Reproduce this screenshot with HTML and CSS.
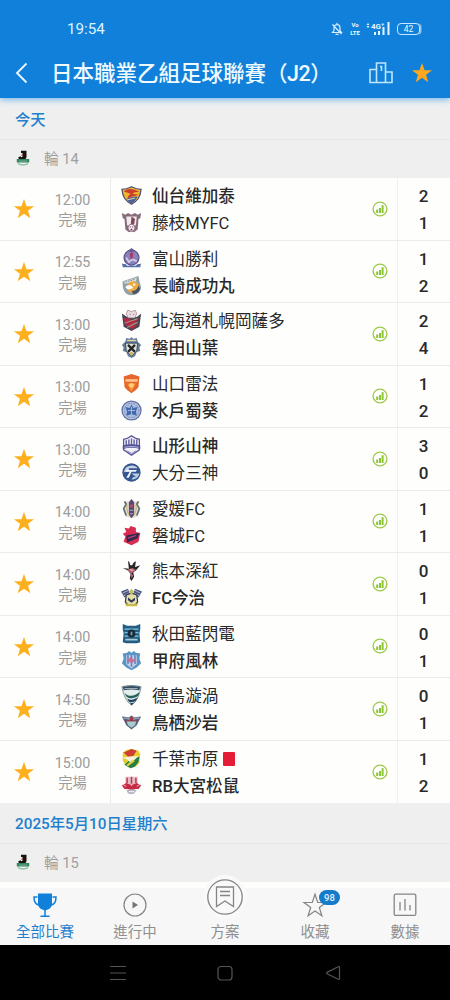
FILE: index.html
```html
<!DOCTYPE html>
<html lang="zh-Hant">
<head>
  <meta charset="UTF-8">
  <meta name="viewport" content="width=device-width, initial-scale=1.0">
  <title>日本職業乙組足球聯賽（J2）</title>
  <link rel="stylesheet" href="styles.css">
</head>
<body>
  <svg class="defs" width="0" height="0">
    <symbol id="star" viewBox="0 0 24 24"><path d="M12 1l2.800 8H23l-6.600 5 2.400 8.200L12 17.300 5.200 22.200 7.600 14 1 9h8.200z"/></symbol>
    <symbol id="stats" viewBox="0 0 16 16">
      <circle cx="8" cy="8" r="6.900" fill="none" stroke="#9ccb4b" stroke-width="1.400"/>
      <path d="M4.200 8.500h2V12h-2zM7 7h2v5H7zM9.600 4.200h2V12h-2z" fill="#8cc435"/>
    </symbol>
    <symbol id="jleague" viewBox="0 0 14 16">
      <path d="M5 .8h5.500V7c0 3.500-7.500 3.500-8.500.500l2.500-1.200c.5 1.200 2 1.200 2-.3V3H5z" fill="#171311"/>
      <path d="M5.500 5.500L7 4.500" stroke="#c23c3c" stroke-width="1.200"/>
      <path d="M.8 9h12.400v3.500H.8z" fill="#358460"/>
      <path d="M2 13.300c3 2 7 2 10 0" fill="none" stroke="#8ebfa5" stroke-width="1.600"/>
      <path d="M3 11h8" stroke="#9bc9b2" stroke-width=".6"/>
    </symbol>
  </svg>

  <header class="header">
    <div class="status">
      <span class="clock">19:54</span>
      <div class="status-icons">
        <svg width="12" height="14" viewBox="0 0 12 14" fill="none" stroke="#d9efff" stroke-width="1.200"><path d="M1.500 10.500h9L9 8.500V6c0-4.500-6-4.500-6 0v2.500zM6 .8v1.500M4.500 12.300h3M1.500 2.500l9 9.500"/></svg>
        <div class="volte"><span>Vo</span><span>LTE</span></div>
        <svg width="24" height="14" viewBox="0 0 24 14" fill="#e5f5ff"><path d="M2 1l1.500 2h-3zM2 6L.5 4h3zM8 10h2v3H8zM12 9h2v4h-2zM16.500 5h2v8h-2zM21.500 0h2v13h-2z"/><text x="5" y="6.500" class="net">4G⁺</text></svg>
        <span class="battery">42</span>
      </div>
    </div>
    <div class="toolbar">
      <svg class="back" width="14" height="22" viewBox="0 0 14 22" fill="none" stroke="#e8f6ff" stroke-width="1.900"><path d="M11.500 1.500L2 11l9.500 9.500"/></svg>
      <h1>日本職業乙組足球聯賽<span class="code">（J2）</span></h1>
      <svg class="podium" width="24" height="22" viewBox="0 0 24 22" fill="none" stroke="#bfe6ff" stroke-width="1.600"><path d="M7.500 20.500V1h9v19.500M7.500 7.500H1v13h22V10h-6.500M11 4.500h1.500V9"/></svg>
      <svg class="fav" width="22" height="22"><use href="#star"/></svg>
    </div>
  </header>

  <main>
    <h2 class="day">今天</h2>
    <div class="round"><svg width="14" height="16"><use href="#jleague"/></svg>輪 14</div>

    <section class="matches">
      <div class="match">
        <svg class="star"><use href="#star"/></svg>
        <div class="time">12:00<br>完場</div>
        <div class="teams">
          <div class="team win"><svg class="crest" viewBox="0 0 24 24"><path d="M1 5c4 0 7-1 11-3 4 2 7 3 11 3-1 9-4 13-11 17C5 18 2 14 1 5z" fill="#edb52b" stroke="#4d4b76" stroke-width="1.300"/><path d="M3 7c6-4 11-3 18 1-4 0-6 0-8 2l7 1c-5 2-9 2-12 5-1-3 1-4 3-6-3-1-5-2-8-3z" fill="#c93e2c"/><path d="M6 16c4-2 8-3 13-3-2 4-4 6-7 8-3-2-5-3-6-5z" fill="#4961a0"/><path d="M7 17l9-2" stroke="#f4e6ae"/></svg>仙台維加泰</div>
          <div class="team"><svg class="crest" viewBox="0 0 24 24"><path d="M1 1l4 2 3-2 4 2 4-2 3 2 4-2-1 6-2 1-1 12-4 3-3-1-3 1-4-3L4 8 2 7z" fill="#866c7a"/><path d="M6 5h12l-1 10-5 3-5-3z" fill="#f1e8eb"/><path d="M12 5l4 3-1 6-4 2z" fill="#81455c"/><circle cx="12" cy="18" r="4" fill="#f5edf0" stroke="#8c6375"/><path d="M10 17h1m2 0h1m-3 3h2" stroke="#65394d" stroke-width="1.500"/></svg>藤枝MYFC</div>
        </div>
        <svg class="stats"><use href="#stats"/></svg>
        <div class="score">2<br>1</div>
      </div>

      <div class="match">
        <svg class="star"><use href="#star"/></svg>
        <div class="time">12:55<br>完場</div>
        <div class="teams">
          <div class="team"><svg class="crest" viewBox="0 0 24 24"><circle cx="12" cy="11" r="8.500" fill="#8a82bb" stroke="#585389" stroke-width="1.400"/><path d="M8 3l4-3 4 3-4 2z" fill="#6a5a91"/><path d="M10 6l4-1-1 8h-2z" fill="#a53b69"/><path d="M6 11l3 5 4-3 5 2" fill="none" stroke="#d3cce4" stroke-width="2"/><path d="M1 17c2 3 4 0 5 2 2 3 4 0 6 1 3 0 4 1 6-1 2-2 3 1 5-2l-1 5H2z" fill="#5670ac"/></svg>富山勝利</div>
          <div class="team win"><svg class="crest" viewBox="0 0 24 24"><path d="M2 7L20 1l1 6 2 7c-1 7-6 9-11 9C5 23 1 17 2 7z" fill="#91a2a8"/><path d="M4 7l14-4-1 4L4 10z" fill="#e3e4df"/><path d="M5 8l11-3" stroke="#6d7d86" stroke-dasharray="2 1"/><circle cx="14" cy="14" r="7" fill="#eda93f"/><path d="M5 14c3-4 7-3 9 1-4 0-5 4-9-1z" fill="#fff"/><path d="M12 18c4 1 7-2 8-6l2 4c-2 4-5 6-8 6z" fill="#485566"/><circle cx="15" cy="11" r="1.500" fill="#fff1cf"/></svg>長崎成功丸</div>
        </div>
        <svg class="stats"><use href="#stats"/></svg>
        <div class="score">1<br>2</div>
      </div>

      <div class="match">
        <svg class="star"><use href="#star"/></svg>
        <div class="time">13:00<br>完場</div>
        <div class="teams">
          <div class="team"><svg class="crest" viewBox="0 0 24 24"><path d="M1 4l6 4h11l5-4-2 15-9 5-9-5z" fill="#474653"/><path d="M6 4l2-4 4 2 4-2 2 4-2 5H8z" fill="#eadde1" stroke="#987381" stroke-width=".8"/><path d="M3 9l6 1 4 2 8-3-7 8 6-1-7 6-8-5z" fill="#b72943"/><path d="M4 15l15-5M7 20l12-6" stroke="#9ca48c" stroke-width="1.200"/><path d="M10 5h1m3 0h1" stroke="#764150"/></svg>北海道札幌岡薩多</div>
          <div class="team win"><svg class="crest" viewBox="0 0 24 24"><path d="M5 5l1-4 4 1 2-2 2 2 4-1 1 4 4 4-2 3 1 4-4 1-2 5-4 2-4-2-2-5-4-1 1-4-2-3z" fill="#677f9f"/><path d="M5 7h14l-1 9-6 6-6-6z" fill="#e4e2cf" stroke="#2d4057"/><path d="M8 9l8 8M16 9l-8 8" stroke="#20252b" stroke-width="2.500"/><path d="M7 4h10" stroke="#e9d896" stroke-width="1.500"/><circle cx="12" cy="19" r="2" fill="#cbb263"/></svg>磐田山葉</div>
        </div>
        <svg class="stats"><use href="#stats"/></svg>
        <div class="score">2<br>4</div>
      </div>

      <div class="match">
        <svg class="star"><use href="#star"/></svg>
        <div class="time">13:00<br>完場</div>
        <div class="teams">
          <div class="team"><svg class="crest" viewBox="0 0 24 24"><path d="M3 4l9-3 9 3-1 12c-2 3-5 5-8 7-3-2-6-4-8-7z" fill="#e7662b"/><path d="M5 7h14v3H5z" fill="#ffc28f"/><path d="M7 12l5 9 5-9z" fill="#f49c42"/><circle cx="12" cy="14" r="2.500" fill="#ffd171"/></svg>山口雷法</div>
          <div class="team win"><svg class="crest" viewBox="0 0 24 24"><circle cx="12" cy="12" r="10.800" fill="#c4cee7" stroke="#6271a8" stroke-width="1.500"/><circle cx="12" cy="12" r="8.500" fill="#a9bbdd" stroke="#6b7fb2" stroke-dasharray="2 1"/><path d="M12 5l2 4 5-1-2 5 1 5-6-2-6 2 1-5-2-5 5 1z" fill="#4368a8"/><path d="M12 8v8m-4-4h8" stroke="#afc5e1"/></svg>水戶蜀葵</div>
        </div>
        <svg class="stats"><use href="#stats"/></svg>
        <div class="score">1<br>2</div>
      </div>

      <div class="match">
        <svg class="star"><use href="#star"/></svg>
        <div class="time">13:00<br>完場</div>
        <div class="teams">
          <div class="team win"><svg class="crest" viewBox="0 0 24 24"><path d="M3 5l4-1 5-3 5 3 4 1v12l-9 6-9-6z" fill="#f2f0fa" stroke="#5d5898" stroke-width="1.500"/><path d="M6 6v7m3-8v6m3-7v9m3-8v6m3-6v8" stroke="#62609e" stroke-width="1.600"/><path d="M2 12c7-2 13-2 20 0v4c-7-2-13-2-20 0z" fill="#4f4e93"/><path d="M4 14c6-1 10-1 16 0" stroke="#cfcfe7" fill="none"/><path d="M7 18l5 3 5-3" stroke="#8b86b8" fill="none"/></svg>山形山神</div>
          <div class="team"><svg class="crest" viewBox="0 0 24 24"><circle cx="12" cy="12" r="10.500" fill="#375590"/><path d="M5 7c4-4 11-4 14 0H9v4H5l-2 1z" fill="#c3d5e6"/><path d="M6 9h12l-1 2h-5l-3 7H6l4-7H5z" fill="#f1f5f9"/><path d="M12 13h9c-1 5-5 7-9 7l2-3h3z" fill="#b9cde2"/></svg>大分三神</div>
        </div>
        <svg class="stats"><use href="#stats"/></svg>
        <div class="score">3<br>0</div>
      </div>

      <div class="match">
        <svg class="star"><use href="#star"/></svg>
        <div class="time">14:00<br>完場</div>
        <div class="teams">
          <div class="team"><svg class="crest" viewBox="0 0 24 24"><path d="M3 3l5 1 4-3 4 3 5-1-1 5 2 5-3 8-7 2-7-2-3-8 2-5z" fill="#e5ddce"/><path d="M9 5l3-4 3 4v14l-3 4-3-4z" fill="#574775"/><path d="M4 4l2 3-3 5 3 8M20 4l-2 3 3 5-3 8" stroke="#567177" fill="none" stroke-width="1.800"/><path d="M7 8c-1 4 0 8 2 11M17 8c1 4 0 8-2 11" stroke="#c2a44e" fill="none"/><circle cx="12" cy="9" r="2" fill="#ac5260"/><path d="M10 14h4m-4 4h4" stroke="#bac2d4"/></svg>愛媛FC</div>
          <div class="team"><svg class="crest" viewBox="0 0 24 24"><path d="M4 3l5 1 2-3 6 2v5l5 1-2 10-8 4-9-4 2-6-3-3 4-2z" fill="#d92c51"/><path d="M6 12l15-3-2 6-12 5z" fill="#302850"/><path d="M8 15l9-3" stroke="#c04872" stroke-width="1.500"/></svg>磐城FC</div>
        </div>
        <svg class="stats"><use href="#stats"/></svg>
        <div class="score">1<br>1</div>
      </div>

      <div class="match">
        <svg class="star"><use href="#star"/></svg>
        <div class="time">14:00<br>完場</div>
        <div class="teams">
          <div class="team"><svg class="crest" viewBox="0 0 24 24"><path d="M8 1c3 1 1 6 5 5 1-4 4-5 4-4l-1 6 6-2-5 6-3 2 1 5-3 5-2-3 1-5-3-4-6-3 7 1z" fill="#292529"/><path d="M7 11l6-2 4 2-5 4 2 3-2 3-1-6z" fill="#ba6470"/><path d="M10 11l4 1" stroke="#ecd8d5"/></svg>熊本深紅</div>
          <div class="team win"><svg class="crest" viewBox="0 0 24 24"><path d="M0 5l8-3 2 6-6 4zM24 5l-8-3-2 6 6 4z" fill="#4b5782"/><path d="M2 7l6-3M3 10l6-3M22 7l-6-3M21 10l-6-3" stroke="#c3cedd"/><path d="M6 9l6-2 6 2 1 8-3 4H8l-3-4z" fill="#e4dfa7" stroke="#303957" stroke-width="1.400"/><path d="M4 18c5 3 11 3 16 0l-2 4H6z" fill="#ccbd42"/><path d="M8 12l4 3 4-3v3l-4 3-4-3z" fill="#303957"/><path d="M9 5l3-3 3 3-3 4z" fill="#c5c065"/></svg>FC今治</div>
        </div>
        <svg class="stats"><use href="#stats"/></svg>
        <div class="score">0<br>1</div>
      </div>

      <div class="match">
        <svg class="star"><use href="#star"/></svg>
        <div class="time">14:00<br>完場</div>
        <div class="teams">
          <div class="team"><svg class="crest" viewBox="0 0 24 24"><path d="M2 1l5 2h10l5-2v6l-1 5 1 10-4 1H6l-4-1 1-10-1-5z" fill="#245d82"/><path d="M4 7h16M4 11h16M4 15h16" stroke="#7ec6df" stroke-width="1.700"/><circle cx="12" cy="12" r="4.500" fill="#182b3b"/><path d="M11 10h2v4h-2z" fill="#7c9bab"/><path d="M5 19h14" stroke="#a4cbd8" stroke-width="2"/></svg>秋田藍閃電</div>
          <div class="team win"><svg class="crest" viewBox="0 0 24 24"><path d="M2 4l5-1 2-2 3 2 3-2 2 2 5 1-1 6 2 5-5 5-6 3-6-3-5-5 2-5z" fill="#5b95c5"/><path d="M6 6h12v10l-6 5-6-5z" fill="#c6cee8"/><path d="M8 6v10m4-10v13m4-13v10" stroke="#5681bd" stroke-width="1.700"/><path d="M7 12l4-4 2 2 4 2-5 3z" fill="#ca6f91"/></svg>甲府風林</div>
        </div>
        <svg class="stats"><use href="#stats"/></svg>
        <div class="score">0<br>1</div>
      </div>

      <div class="match">
        <svg class="star"><use href="#star"/></svg>
        <div class="time">14:50<br>完場</div>
        <div class="teams">
          <div class="team"><svg class="crest" viewBox="0 0 24 24"><path d="M1 2c7-2 15-2 22 0-2 10-5 17-11 21C6 19 3 12 1 2z" fill="#e4eeea" stroke="#4d6b74" stroke-width=".8"/><path d="M2 2c7-1 13-1 20 0l-1 4c-6-1-12-1-18 0z" fill="#344c60"/><path d="M4 9c5 5 12 4 17-1l-1 4c-5 4-10 4-14 1z" fill="#28615b"/><path d="M7 15c4 3 8 2 12-1l-2 4c-3 2-5 2-8 1zM10 20c2 1 4 1 6-.500L12 23z" fill="#244365"/><path d="M4 4h15" stroke="#c8d6dd" stroke-width=".8"/></svg>德島漩渦</div>
          <div class="team win"><svg class="crest" viewBox="0 0 24 24"><path d="M1 5l8 1 3-2 3 2 8-1-3 6-2 4-6 5-6-5-2-4z" fill="#56647b"/><path d="M6 9l6-1 6 1-2 6-4 3-4-3z" fill="#a8cbd0"/><path d="M3 7h18" stroke="#c2ccd7"/><circle cx="12" cy="8" r="2.300" fill="#ab3546"/><path d="M5 10h14" stroke="#91374d" stroke-width="1.500"/></svg>鳥栖沙岩</div>
        </div>
        <svg class="stats"><use href="#stats"/></svg>
        <div class="score">0<br>1</div>
      </div>

      <div class="match">
        <svg class="star"><use href="#star"/></svg>
        <div class="time">15:00<br>完場</div>
        <div class="teams">
          <div class="team"><svg class="crest" viewBox="0 0 24 24"><path d="M2 5l5-3 5-1 8 2 2 4-1 10-4 4-6 2-6-3-3-6z" fill="#e6ce32"/><path d="M3 5l9-4 6 2-4 6-6 1z" fill="#cf3f34"/><path d="M12 12l9-2-1 6-4 5-5 2-7-4z" fill="#247f4c"/><path d="M1 11l8-1 11-1-5 5-5 2-3-3z" fill="#f5f2db"/><path d="M7 20l8-6" stroke="#e7cf38" stroke-width="2.500"/></svg>千葉市原<i class="red-card"></i></div>
          <div class="team win"><svg class="crest" viewBox="0 0 24 24"><path d="M5 2h14v9l-7 3-7-3z" fill="#e9bcc4"/><path d="M7 3v6m5-7v8m5-7v6" stroke="#bb3853" stroke-width="1.700"/><path d="M1 12l5-3 5 2 1 2 1-2 5-2 5 3-3 4h-4l-4 2-4-2H4z" fill="#c82943"/><path d="M1 10l5 3m17-3l-5 3" stroke="#f1cbd0"/><path d="M6 17c4-1 8-1 12 0l-3 4-3 1-4-1z" fill="#b7b3c0"/><path d="M9 19h6" stroke="#fff"/></svg>RB大宮松鼠</div>
        </div>
        <svg class="stats"><use href="#stats"/></svg>
        <div class="score">1<br>2</div>
      </div>
    </section>

    <h2 class="day">2025年5月10日星期六</h2>
    <div class="round"><svg width="14" height="16"><use href="#jleague"/></svg>輪 15</div>
  </main>

  <nav class="tabs">
    <a class="tab active">
      <svg width="26" height="26" viewBox="0 0 26 26"><path d="M6 1.500h14v10c0 4-3 6-7 7-4-1-7-3-7-7z" fill="#1080da"/><path d="M5.500 5H2c0 5 1 7.500 5 8M20.500 5H24c0 5-1 7.500-5 8M13 18v5.500M8.500 24.300h9" fill="none" stroke="#1080da" stroke-width="1.500"/></svg>
      全部比賽
    </a>
    <a class="tab">
      <svg width="26" height="26" viewBox="0 0 26 26"><circle cx="13" cy="13" r="11" fill="none" stroke="#858585" stroke-width="1.200"/><path d="M10.500 9.500l5.500 3.500-5.500 3.500z" fill="#777"/></svg>
      進行中
    </a>
    <a class="tab plan">
      <span class="plan-icon"><svg width="36" height="36" viewBox="0 0 36 36" fill="none" stroke="#858585" stroke-width="1.300"><circle cx="18" cy="18" r="17.200"/><path d="M9.500 8h17v19.500L18 22l-8.500 5.500zM13 12.500h10M13 16.500h10"/></svg></span>
      方案
    </a>
    <a class="tab">
      <svg width="26" height="26" viewBox="0 0 26 26" fill="none" stroke="#858585" stroke-width="1.200"><path d="M13 2.200l2.700 8.300H24l-6.700 5 2.600 8.300-6.900-4.900-6.900 4.900 2.600-8.300-6.700-5h8.300z"/></svg>
      <b class="badge">98</b>
      收藏
    </a>
    <a class="tab">
      <svg width="26" height="26" viewBox="0 0 26 26" fill="none" stroke="#858585" stroke-width="1.300"><rect x="2.200" y="2.200" width="21.600" height="21.200" rx="1.500"/><path d="M8 10v8.500M13 7v11.500M18 13v5.500"/></svg>
      數據
    </a>
  </nav>

  <footer class="system">
    <svg width="18" height="18" viewBox="0 0 18 18"><path d="M1 2.500h16M1 9h16M1 15.500h16"/></svg>
    <svg width="18" height="18" viewBox="0 0 18 18"><rect x="2" y="2.500" width="14" height="13.500" rx="3"/></svg>
    <svg width="18" height="18" viewBox="0 0 18 18"><path d="M15.500 3.500v11q0 1.300-1.300.8L3 9.700q-1-.7 0-1.300l11.200-5.700q1.300-.5 1.300.8z"/></svg>
  </footer>
</body>
</html>
```

FILE: styles.css
```css
* {
  box-sizing: border-box;
}
body {
  margin: 0;
  width: 450px;
  height: 1000px;
  overflow: hidden;
  display: flex;
  flex-direction: column;
  background: #fefefd;
  font-family: Roboto, "Noto Sans CJK TC", sans-serif;
  color: #292929;
}
svg {
  display: block;
  flex-shrink: 0;
}
.defs {
  position: absolute;
}

/* header */
.header {
  height: 98px;
  flex-shrink: 0;
  background: #1080da;
  color: #eefaff;
  box-shadow: 0 2px 6px #7db9ea;
  z-index: 1;
}
.status {
  height: 48px;
  padding: 10px 28px 0 67px;
  display: flex;
  align-items: center;
  justify-content: space-between;
}
.clock {
  font-size: 15.200px;
  color: #def3ff;
}
.status-icons {
  display: flex;
  align-items: center;
}
.volte {
  width: 10px;
  margin: 0 6px 0 7px;
  display: flex;
  flex-direction: column;
  align-items: center;
  font-size: 6px;
  line-height: 8px;
  font-weight: 700;
}
.net {
  font-size: 8px;
  font-weight: 700;
}
.battery {
  width: 23px;
  height: 12px;
  margin: 0 2px 0 7px;
  border: 1px solid #c6e8ff;
  border-radius: 4px;
  font-size: 8.500px;
  line-height: 10px;
  text-align: center;
  box-shadow: 2px 0 0 -0.500px #8cc6f1;
}
.toolbar {
  height: 50px;
  padding: 0 17px 0 15px;
  display: flex;
  align-items: center;
}
.toolbar h1 {
  flex: 1;
  margin: 2px 0 0 22px;
  font-size: 21.500px;
  font-weight: 500;
  line-height: 30px;
  white-space: nowrap;
}
.code {
  letter-spacing: -0.500px;
}
.fav {
  margin-left: 18px;
  fill: #fda81c;
}

/* match list */
main {
  height: 790px;
  flex-shrink: 0;
}
.day {
  height: 41.500px;
  margin: 0;
  padding: 2px 15px 0;
  background: #efefef;
  border-bottom: 1px solid #e7e7e7;
  color: #1d7fcd;
  font-size: 15.300px;
  font-weight: 500;
  line-height: 41px;
}
.matches + .day {
  height: 40.500px;
  padding-top: 1px;
}
.round {
  height: 38.500px;
  padding: 0 16px 2px;
  display: flex;
  align-items: center;
  gap: 14px;
  background: #efefef;
  color: #a0a0a0;
  font-size: 14.700px;
}
.match {
  height: 62.500px;
  display: grid;
  grid-template-columns: 48px 62px 253px 34px 53px;
  align-items: center;
  border-bottom: 1px solid #ebebeb;
}
.match:last-child {
  border-bottom: 0;
}
.star {
  width: 22px;
  height: 22px;
  margin: 1px 0 0 13px;
  fill: #fdb01d;
}
.time {
  padding: 3px 13px 0 0;
  color: #9c9c9c;
  font-size: 14.300px;
  line-height: 20.500px;
  text-align: center;
}
.teams {
  height: 100%;
  padding: 5px 0 0 10px;
  border-left: 1px solid #ebebeb;
}
.team {
  height: 27px;
  display: flex;
  align-items: center;
  gap: 10px;
  font-size: 16.600px;
  line-height: 27px;
  white-space: nowrap;
}
.win {
  font-weight: 500;
}
.crest {
  width: 21px;
  height: 21px;
  margin-top: -2px;
}
.red-card {
  width: 12px;
  height: 14px;
  margin-left: -5px;
  background: #e51c36;
  border-radius: 1px;
}
.stats {
  width: 16px;
  height: 16px;
  margin-left: 9px;
}
.score {
  height: 100%;
  padding: 5px 1px 0 0;
  border-left: 1px solid #f0f0f0;
  font-size: 17px;
  font-weight: 500;
  line-height: 27px;
  text-align: center;
}

/* bottom tabs */
.tabs {
  height: 57px;
  flex-shrink: 0;
  display: grid;
  grid-template-columns: repeat(5, 1fr);
  background: #f7f7f7;
}
.tab {
  position: relative;
  display: flex;
  flex-direction: column;
  align-items: center;
  padding-top: 4px;
  color: #8f8f8f;
  font-size: 14.500px;
  line-height: 29px;
}
.active {
  color: #1d7fcd;
}
.plan {
  padding-top: 30px;
}
.plan-icon {
  position: absolute;
  top: -13px;
  padding: 4px;
  border-radius: 50%;
  background: #f9f9f9;
}
.badge {
  position: absolute;
  top: 2px;
  left: 49px;
  width: 21px;
  height: 15px;
  border-radius: 8px;
  background: #167bc8;
  color: #e4f5ff;
  font-size: 9.500px;
  font-weight: 500;
  line-height: 15px;
  text-align: center;
}

/* android bar */
.system {
  height: 55px;
  flex-shrink: 0;
  padding: 0 108.500px;
  display: flex;
  align-items: center;
  justify-content: space-between;
  background: #000;
  fill: none;
  stroke: #555;
  stroke-width: 1.200;
}
```
